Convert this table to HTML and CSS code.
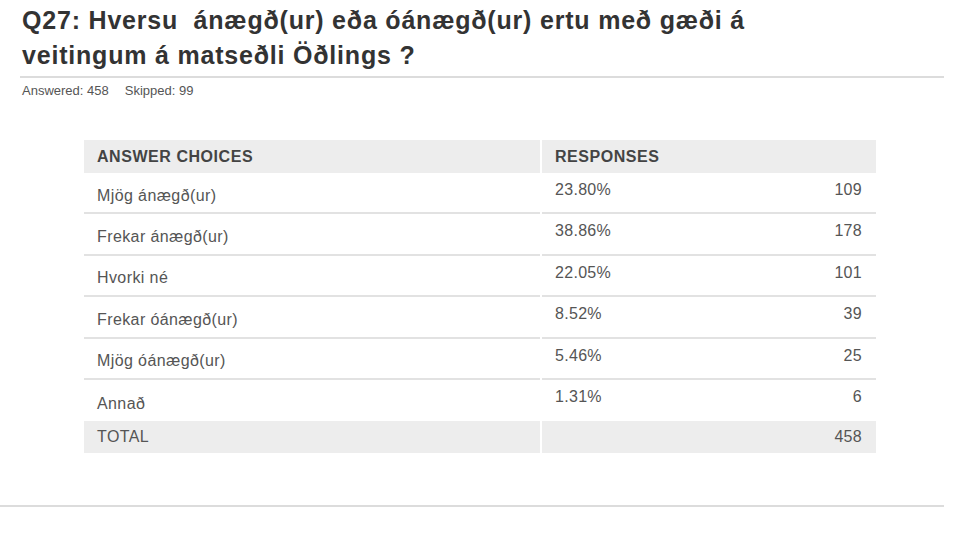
FILE: index.html
```html
<!DOCTYPE html>
<html lang="is">
<head>
<meta charset="utf-8">
<title>Q27</title>
<link rel="stylesheet" href="styles.css">
</head>
<body>
<div class="page">
  <div class="head">
    <h1 class="title">Q27: Hversu&nbsp; ánægð(ur) eða óánægð(ur) ertu með gæði á veitingum á matseðli Öðlings ?</h1>
  </div>
  <div class="meta"><span>Answered: 458</span><span>Skipped: 99</span></div>
  <table class="results">
    <thead>
      <tr><th class="c1">ANSWER CHOICES</th><th class="c2">RESPONSES</th></tr>
    </thead>
    <tbody>
      <tr><td class="c1">Mjög ánægð(ur)</td><td class="c2"><div class="resp"><span>23.80%</span><span>109</span></div></td></tr>
      <tr><td class="c1">Frekar ánægð(ur)</td><td class="c2"><div class="resp"><span>38.86%</span><span>178</span></div></td></tr>
      <tr><td class="c1">Hvorki né</td><td class="c2"><div class="resp"><span>22.05%</span><span>101</span></div></td></tr>
      <tr><td class="c1">Frekar óánægð(ur)</td><td class="c2"><div class="resp"><span>8.52%</span><span>39</span></div></td></tr>
      <tr><td class="c1">Mjög óánægð(ur)</td><td class="c2"><div class="resp"><span>5.46%</span><span>25</span></div></td></tr>
      <tr><td class="c1">Annað</td><td class="c2"><div class="resp"><span>1.31%</span><span>6</span></div></td></tr>
    </tbody>
    <tfoot>
      <tr><td class="c1">TOTAL</td><td class="c2"><div class="resp end"><span>458</span></div></td></tr>
    </tfoot>
  </table>
  <div class="foot-rule"></div>
</div>
</body>
</html>
```

FILE: styles.css
```css
html, body {
  margin: 0;
  padding: 0;
  background: #fff;
}
body {
  font-family: "Liberation Sans", Arial, sans-serif;
  color: #555;
}
.page {
  width: 960px;
  height: 540px;
  padding-top: 3px;
  box-sizing: border-box;
}
.head {
  margin: 0 16px 0 20px;
  border-bottom: 2px solid #dcdcdc;
  padding: 0 0 3px 2px;
}
.title {
  margin: 0;
  font-size: 25px;
  line-height: 35px;
  font-weight: bold;
  color: #333;
  letter-spacing: 0.8px;
  width: 780px;
}
.meta {
  margin: 5px 0 0 22px;
  font-size: 13px;
  line-height: 15px;
  color: #555;
  display: flex;
  gap: 16px;
}
.results {
  margin: 42px 0 0 82px;
  width: 796px;
  border-collapse: separate;
  border-spacing: 2px 0;
  font-size: 16px;
  color: #555;
}
.results th {
  background: #ededed;
  height: 33px;
  padding: 0 13px;
  text-align: left;
  font-size: 16px;
  letter-spacing: 0.55px;
  font-weight: bold;
  color: #444;
  vertical-align: middle;
  box-sizing: border-box;
}
.results th.c1 {
  width: 456px;
}
.results tbody td {
  height: 41.4px;
  box-sizing: border-box;
  border-bottom: 2px solid #e2e2e2;
  padding: 0 13px;
}
.results tbody tr:last-child td {
  border-bottom: none;
}
.results td.c1 {
  letter-spacing: 0.4px;
}
.results tbody td.c1 {
  vertical-align: middle;
  padding-top: 6px;
}
.results tbody td.c2 {
  vertical-align: top;
  padding-top: 8px;
  padding-right: 14px;
}
.resp {
  display: flex;
  justify-content: space-between;
  font-size: 16px;
  letter-spacing: 0.3px;
}
.resp.end {
  justify-content: flex-end;
}
.results tfoot td {
  background: #ededed;
  height: 32px;
  padding: 0 13px;
  vertical-align: middle;
}
.results tfoot td.c2 {
  padding-right: 14px;
}
.foot-rule {
  margin-top: 52px;
  width: 944px;
  border-top: 2px solid #dcdcdc;
}
```
